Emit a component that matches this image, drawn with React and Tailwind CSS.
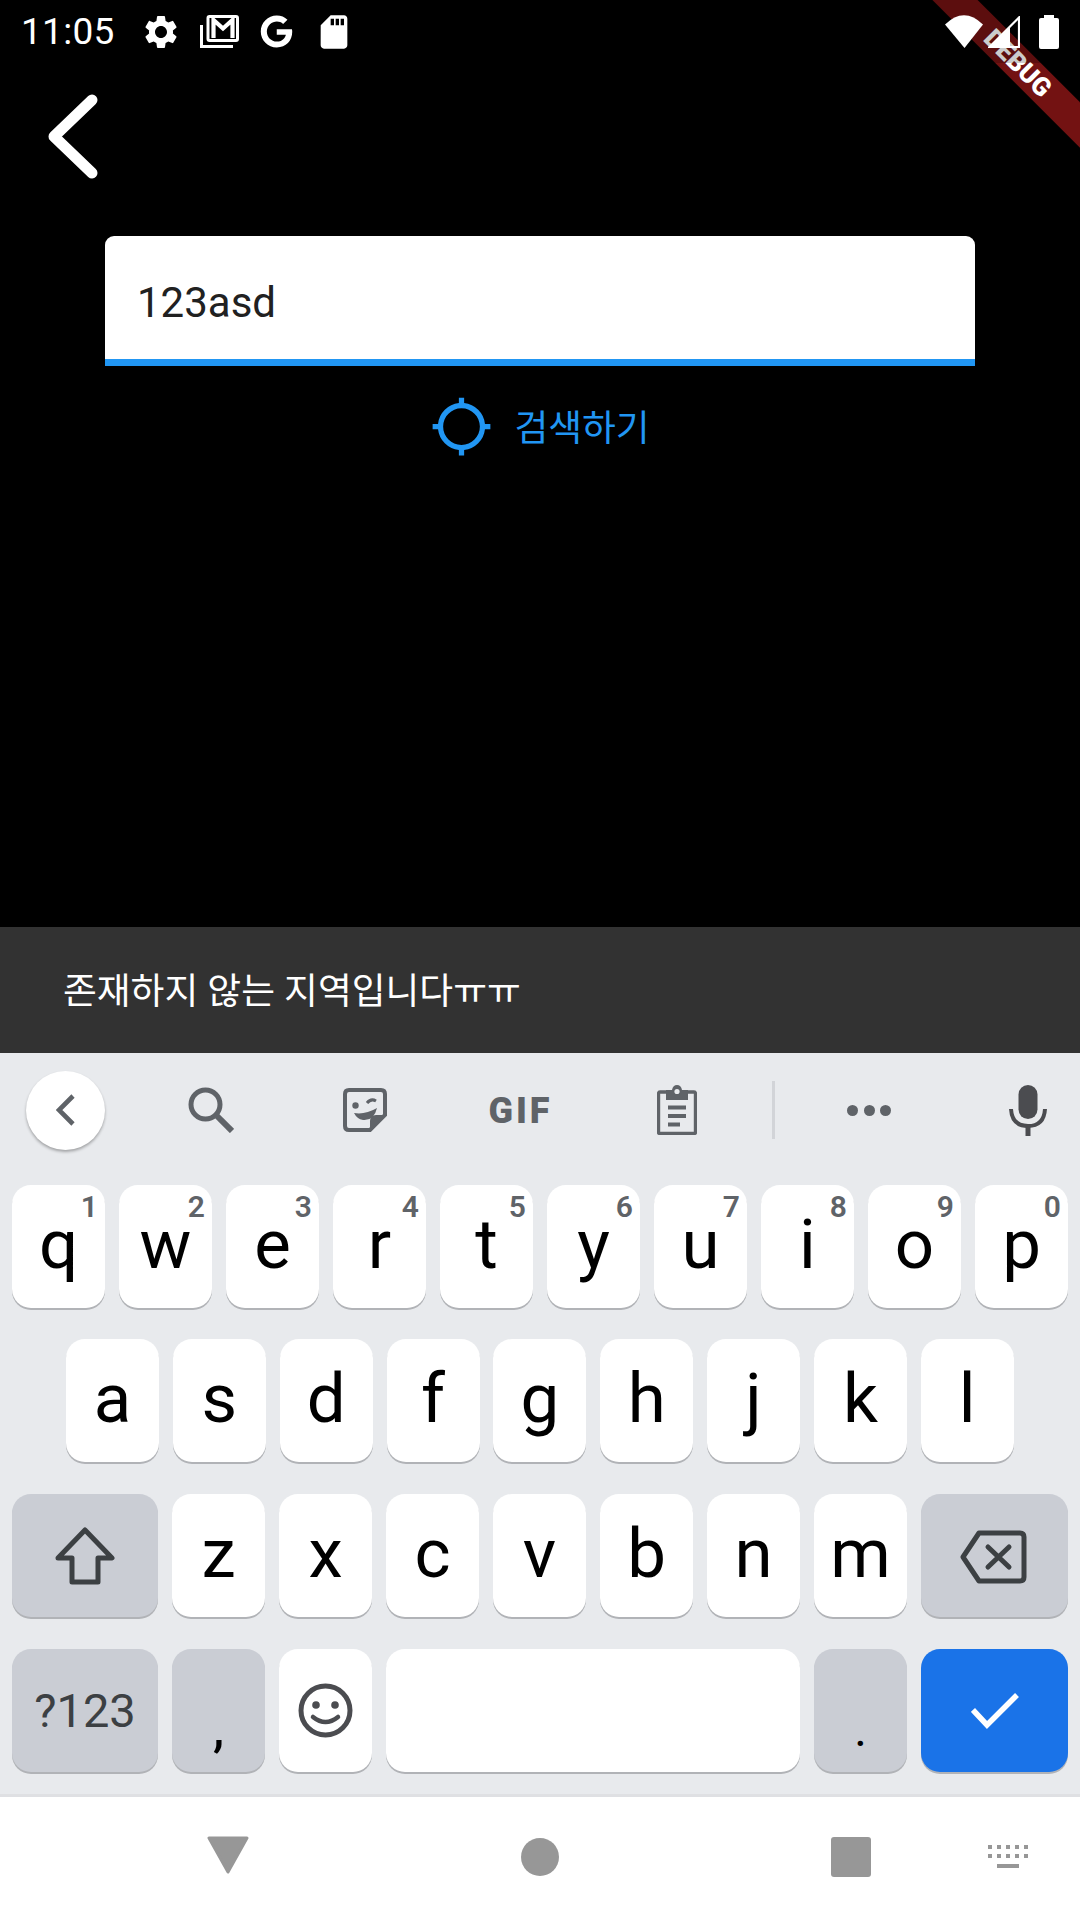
import React from "react";
import { FaGoogle } from "react-icons/fa";
import { MdSettings, MdSdCard, MdGpsNotFixed } from "react-icons/md";

const ROW1 = [["q", "1"], ["w", "2"], ["e", "3"], ["r", "4"], ["t", "5"], ["y", "6"], ["u", "7"], ["i", "8"], ["o", "9"], ["p", "0"]];
const ROW2 = ["a", "s", "d", "f", "g", "h", "j", "k", "l"];
const ROW3 = ["z", "x", "c", "v", "b", "n", "m"];

/* one keyboard key, white by default */
function Key({ className = "w-[93px] bg-white", children }) {
    return (
        <div className={"relative h-[123px] rounded-[19px] shadow-[0_2px_0_#b1b3b7] flex items-center justify-center " + className}>
            {children}
        </div>
    );
}

function Letter({ label, hint }) {
    return (
        <Key>
            <span className="text-[69px] leading-none text-black pb-[5px]">{label}</span>
            {hint && <span className="absolute top-[5px] right-[7px] text-[30px] leading-[34px] font-semibold text-[#5f6368]">{hint}</span>}
        </Key>
    );
}

function StatusBar() {
    return (
        <div className="relative z-20 h-[63px] flex items-center text-white">
            <span className="ml-[21px] text-[37px] leading-none tracking-[0.3px]">11:05</span>
            <MdSettings className="ml-[26px] w-[40px] h-[40px]" />
            <svg className="ml-[19px] w-[39px] h-[33px]" viewBox="0 0 39 33" fill="none" stroke="white">
                <path d="M1.5 10V31.5H33" strokeWidth="3" />
                <rect x="8" y="1.5" width="29.5" height="24" rx="1.5" strokeWidth="3" />
                <path d="M13.5 23V5L23 13.5L32.5 5V23" strokeWidth="4.2" />
            </svg>
            <FaGoogle className="ml-[21px] w-[33px] h-[33px]" />
            <MdSdCard className="ml-[21px] w-[40px] h-[40px]" />
            <div className="ml-auto mr-[21px] flex items-center">
                <svg className="w-[38px] h-[33px]" viewBox="0 0 38 33" fill="white">
                    <path d="M19.5 33L0 9.5Q19 -9 38 9.5Z" />
                </svg>
                <svg className="ml-[5px] w-[32px] h-[32px]" viewBox="0 0 32 32">
                    <path d="M1.5 31L31 1.5V31Z" fill="none" stroke="white" strokeWidth="2.2" />
                    <path d="M0 32L22 10V32Z" fill="white" />
                </svg>
                <svg className="ml-[19px] w-[20px] h-[34px]" viewBox="0 0 20 34" fill="white">
                    <path d="M5 0H15V3H18Q20 3 20 5V32Q20 34 18 34H2Q0 34 0 32V5Q0 3 2 3H5Z" />
                </svg>
            </div>
        </div>
    );
}

function Toolbar() {
    return (
        <div className="h-[132px] pb-[18px] flex items-center">
            <div className="w-[131px] flex justify-center">
                <div className="w-[79px] h-[79px] rounded-full bg-white shadow-[0_2px_3px_rgba(0,0,0,0.3)] flex items-center justify-center">
                    <svg className="w-[20px] h-[32px]" viewBox="0 0 20 32" fill="none" stroke="#5f6368" strokeWidth="4.6">
                        <path d="M17 2L3 16L17 30" />
                    </svg>
                </div>
            </div>
            <div className="w-[160px] flex justify-center">
                <svg className="w-[46px] h-[46px]" viewBox="0 0 46 46" fill="none" stroke="#5f6368">
                    <circle cx="17.5" cy="17.5" r="14.5" strokeWidth="5" />
                    <path d="M28 28L44 44" strokeWidth="6" />
                </svg>
            </div>
            <div className="w-[148px] flex justify-center">
                <svg className="w-[44px] h-[44px]" viewBox="0 0 44 44" fill="none">
                    <path d="M27 42H6Q2 42 2 38V6Q2 2 6 2H38Q42 2 42 6V27Z" stroke="#5f6368" strokeWidth="4" />
                    <path d="M42 27L27 42V33Q27 27 33 27Z" fill="#5f6368" />
                    <circle cx="12.5" cy="17.5" r="3.2" fill="#5f6368" />
                    <path d="M24 15Q28 10 33 13" stroke="#5f6368" strokeWidth="3" />
                    <path d="M11 25Q22 27 34 20Q31 33 20 32Q14 31 11 25Z" fill="#5f6368" />
                </svg>
            </div>
            <div className="w-[160px] flex justify-center pl-[3px] pt-[1px]">
                <span className="text-[36px] leading-none font-black tracking-[3px] text-[#5f6368]">GIF</span>
            </div>
            <div className="w-[156px] flex justify-center">
                <svg className="w-[40px] h-[50px]" viewBox="0 0 40 50" fill="none">
                    <path d="M10 7H3Q1.5 7 1.5 9V47Q1.5 48.5 3 48.5H37Q38.5 48.5 38.5 47V9Q38.5 7 37 7H30" stroke="#5f6368" strokeWidth="3.4" />
                    <path d="M9 5H15Q16 0 20 0Q24 0 25 5H31V15H9Z" fill="#5f6368" />
                    <circle cx="20" cy="6.5" r="2.6" fill="#e8eaed" />
                    <path d="M11 22.5H29M11 31H29M11 39.5H23" stroke="#5f6368" strokeWidth="4" />
                </svg>
            </div>
            <div className="w-[36px] flex justify-center">
                <div className="w-[3px] h-[58px] bg-[#d2d4d8]" />
            </div>
            <div className="w-[156px] flex justify-center gap-[5.5px]">
                <div className="w-[11px] h-[11px] rounded-full bg-[#5f6368]" />
                <div className="w-[11px] h-[11px] rounded-full bg-[#5f6368]" />
                <div className="w-[11px] h-[11px] rounded-full bg-[#5f6368]" />
            </div>
            <div className="w-[133px] pl-[28px] flex justify-center">
                <svg className="w-[38px] h-[51px]" viewBox="0 0 38 51" fill="none">
                    <rect x="9.5" y="0" width="19" height="34" rx="9.5" fill="#4b4c50" />
                    <path d="M2 24Q3 41 19 41Q35 41 36 24" stroke="#4b4c50" strokeWidth="4" />
                    <path d="M19 41V51" stroke="#4b4c50" strokeWidth="5" />
                </svg>
            </div>
        </div>
    );
}

function Keyboard() {
    return (
        <div className="bg-[#e8eaed] h-[741px] border-b-[3px] border-[#dfe0e3] box-content">
            <Toolbar />
            <div className="flex flex-col px-[12px]">
                <div className="flex justify-between">
                    {ROW1.map(([label, hint]) => <Letter key={label} label={label} hint={hint} />)}
                </div>
                <div className="mt-[31px] ml-[54px] flex gap-[13.85px]">
                    {ROW2.map((label) => <Letter key={label} label={label} />)}
                </div>
                <div className="mt-[32px] flex justify-between">
                    <Key className="w-[146px] bg-[#cacdd4]">
                        <svg className="w-[60px] h-[58px]" viewBox="0 0 60 58" fill="none" stroke="#3c4043" strokeWidth="5" strokeLinejoin="round">
                            <path d="M30 3L57 31H43V55H17V31H3Z" />
                        </svg>
                    </Key>
                    <div className="flex gap-[14px]">
                        {ROW3.map((label) => <Letter key={label} label={label} />)}
                    </div>
                    <Key className="w-[147px] bg-[#cacdd4]">
                        <svg className="w-[67px] h-[54px] mr-[3px] mt-[3px]" viewBox="0 0 67 54" fill="none" stroke="#3c4043" strokeLinejoin="round" strokeLinecap="round">
                            <path d="M19 3H60Q64 3 64 7V47Q64 51 60 51H19L3 27Z" strokeWidth="5" />
                            <path d="M28 17L49 37M49 17L28 37" strokeWidth="5" />
                        </svg>
                    </Key>
                </div>
                <div className="mt-[32px] flex justify-between">
                    <Key className="w-[146px] bg-[#cacdd4]">
                        <span className="text-[47px] leading-none text-[#3c4043]">?123</span>
                    </Key>
                    <Key className="w-[93px] bg-[#cacdd4]">
                        <span className="text-[50px] leading-none font-medium text-black pt-[36px]">,</span>
                    </Key>
                    <Key>
                        <svg className="w-[55px] h-[55px]" viewBox="0 0 55 55" fill="none" stroke="#4b4c50">
                            <circle cx="27.5" cy="27.5" r="24.5" strokeWidth="5" />
                            <circle cx="18" cy="22" r="3.8" fill="#4b4c50" stroke="none" />
                            <circle cx="37" cy="22" r="3.8" fill="#4b4c50" stroke="none" />
                            <path d="M15 34Q27.5 44 40 34" strokeWidth="4.5" strokeLinecap="round" />
                        </svg>
                    </Key>
                    <Key className="w-[414px] bg-white" />
                    <Key className="w-[93px] bg-[#cacdd4]">
                        <span className="text-[48px] leading-none text-black pt-[38px]">.</span>
                    </Key>
                    <Key className="w-[147px] bg-[#1a73e8]">
                        <svg className="w-[48px] h-[38px]" viewBox="0 0 48 38" fill="none" stroke="white" strokeWidth="5.5">
                            <path d="M2 18L16 33L46 3" />
                        </svg>
                    </Key>
                </div>
            </div>
        </div>
    );
}

function NavBar() {
    return (
        <div className="bg-white h-[123px] flex items-center pb-[4px]">
            <svg className="ml-[207px] mb-[3px] w-[42px] h-[38px]" viewBox="0 0 42 38" fill="#979797" stroke="#979797" strokeWidth="3" strokeLinejoin="round">
                <path d="M2 2H40L21 36Z" />
            </svg>
            <div className="ml-[272px] w-[38px] h-[38px] rounded-full bg-[#979797]" />
            <div className="ml-[272px] w-[40px] h-[40px] rounded-[3px] bg-[#979797]" />
            <svg className="ml-[117px] w-[40px] h-[23px]" viewBox="0 0 40 23" fill="#979797">
                <path d="M0 0h4v4H0zM9 0h4v4H9zM18 0h4v4h-4zM27 0h4v4h-4zM36 0h4v4h-4zM0 9h4v4H0zM9 9h4v4H9zM18 9h4v4h-4zM27 9h4v4h-4zM36 9h4v4h-4zM9 19h22v4H9z" />
            </svg>
        </div>
    );
}

export default function App() {
    return (
        <div className="relative w-[1080px] h-[1920px] overflow-hidden bg-black flex flex-col font-['Roboto','Noto_Sans_CJK_KR',sans-serif]">
            <StatusBar />

            <div className="h-[173px] pt-[29px] pl-[44px]">
                <svg className="w-[56px] h-[88px]" viewBox="0 0 56 88" fill="none" stroke="white" strokeWidth="11" strokeLinecap="round" strokeLinejoin="round">
                    <path d="M48 8L10 44.5L48 81" />
                </svg>
            </div>

            <div className="mx-[105px] h-[130px] bg-white rounded-t-[9px] border-b-[7px] border-[#2196f3] pl-[32px] flex items-center">
                <span className="text-[42px] leading-none text-[#212121] pt-[11px]">123asd</span>
            </div>

            <div className="mt-[29px] h-[63px] flex items-center justify-center gap-[21px] text-[#2196f3]">
                <MdGpsNotFixed className="w-[63px] h-[63px]" />
                <span className="text-[36.75px] leading-none pt-[5px]">검색하기</span>
            </div>

            <div className="mt-auto h-[126px] bg-[#323232] pl-[63px] flex items-center">
                <span className="text-[36.75px] leading-none text-white pt-[5px]">존재하지 않는 지역입니다ㅠㅠ</span>
            </div>

            <Keyboard />
            <NavBar />

            {/* flutter debug ribbon, sits under the status bar scrim */}
            <div className="absolute left-[867px] top-[46px] w-[300px] h-[32px] rotate-45 bg-[#b71c1c]/[0.627] flex items-center justify-center">
                <span className="text-[26px] leading-none font-black text-white pl-[3px]">DEBUG</span>
            </div>
            <div className="absolute inset-x-0 top-0 h-[63px] bg-black/20 z-10" />
        </div>
    );
}
